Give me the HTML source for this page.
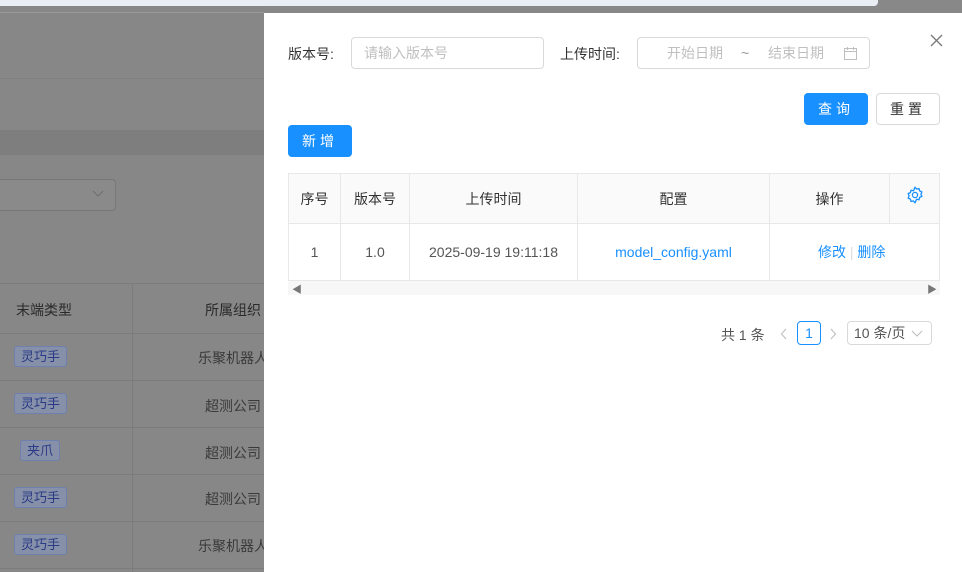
<!DOCTYPE html>
<html><head><meta charset="utf-8"><style>
*{box-sizing:border-box;margin:0;padding:0}
body{width:962px;height:572px;overflow:hidden;position:relative;font-family:"Liberation Sans","Noto Sans CJK SC",sans-serif;font-size:14px;color:#333;background:#888}
.bg{position:absolute;left:0;top:0;width:264px;height:572px;background:#878787}
.abs{position:absolute}
.tag{position:absolute;border:1px solid #6f7fae;border-radius:3px;background:#8690a8;color:#2b3a86;font-size:13px;height:21px;line-height:19px;padding:0 6px}
.hl{position:absolute;left:0;width:264px;height:1px;background:#7c7c7c}
.inp{position:absolute;border:1px solid #d9d9d9;border-radius:4px;height:32px;color:#bfbfbf;font-size:14px;line-height:30px}
.btn{position:absolute;border-radius:4px;height:32px;line-height:32px;text-align:center;font-size:14px;letter-spacing:4px}
table{border-collapse:collapse;position:absolute;left:24px;top:160px;width:652px}
td,th{border:1px solid #e8e8e8;text-align:center;font-weight:normal;font-size:14px}
th{background:#fafafa;height:50px;color:#333}
td{height:57px;color:#555}
a{color:#1890ff;text-decoration:none}
.org{position:absolute;color:#3a3a3a}
</style></head><body>
<div class="bg"></div>
<div class="abs" style="left:0;top:0;width:878px;height:6px;background:#e9edf4;border-radius:0 0 4px 0"></div>
<div class="abs" style="left:0;top:12px;width:264px;height:1px;background:#9a9a9a"></div>
<div class="hl" style="top:78px;background:#808080"></div>
<div class="abs" style="left:0;top:130px;width:264px;height:25px;background:#7e7e7e"></div>
<div class="abs" style="left:-5px;top:179px;width:121px;height:32px;border:1px solid #777;border-radius:4px;background:#8a8a8a"></div>
<svg class="abs" style="left:92px;top:190px" width="12" height="8"><path d="M1 1l5 5 5-5" fill="none" stroke="#6e6e6e" stroke-width="1"/></svg>
<div class="hl" style="top:283px"></div>
<div class="abs" style="left:132px;top:283px;width:1px;height:289px;background:#7c7c7c"></div>
<div class="abs" style="left:16px;top:300px;color:#2a2a2a">末端类型</div>
<div class="org" style="top:300px;left:205px;color:#2a2a2a">所属组织</div>
<div class="hl" style="top:333px"></div>
<div class="hl" style="top:380px"></div>
<div class="hl" style="top:427px"></div>
<div class="hl" style="top:474px"></div>
<div class="hl" style="top:521px"></div>
<div class="hl" style="top:568px"></div>
<div class="tag" style="left:14px;top:346px">灵巧手</div><div class="org" style="left:198px;top:348px">乐聚机器人</div>
<div class="tag" style="left:14px;top:393px">灵巧手</div><div class="org" style="left:205px;top:396px">超测公司</div>
<div class="tag" style="left:20px;top:440px">夹爪</div><div class="org" style="left:205px;top:443px">超测公司</div>
<div class="tag" style="left:14px;top:487px">灵巧手</div><div class="org" style="left:205px;top:489px">超测公司</div>
<div class="tag" style="left:14px;top:534px">灵巧手</div><div class="org" style="left:198px;top:536px">乐聚机器人</div>
<div class="abs" style="left:264px;top:13px;width:698px;height:559px;background:#fff">
 <div class="abs" style="left:24px;top:31px;color:#333">版本号:</div>
 <div class="inp" style="left:87px;top:24px;width:193px;padding-left:12px">请输入版本号</div>
 <div class="abs" style="left:296px;top:31px;color:#333">上传时间:</div>
 <div class="inp" style="left:373px;top:24px;width:233px"><span class="abs" style="left:29px">开始日期</span><span class="abs" style="left:103px;color:#999">~</span><span class="abs" style="left:130px">结束日期</span>
 <svg class="abs" style="left:206px;top:9px" width="13" height="13"><rect x="0.5" y="1.5" width="12" height="11" fill="none" stroke="#bfbfbf"/><path d="M0.5 4.5h12M3.5 0v3M9.5 0v3" stroke="#bfbfbf"/></svg></div>
 <svg class="abs" style="left:666px;top:21px" width="13" height="13"><path d="M1 1l11 11M12 1L1 12" stroke="#777" stroke-width="1.3"/></svg>
 <div class="btn" style="left:540px;top:80px;width:64px;background:#1890ff;color:#fff">查询</div>
 <div class="btn" style="left:612px;top:80px;width:64px;border:1px solid #d9d9d9;color:#333;line-height:30px">重置</div>
 <div class="btn" style="left:24px;top:112px;width:64px;background:#1890ff;color:#fff">新增</div>
 <table>
 <tr><th style="width:52px">序号</th><th style="width:69px">版本号</th><th style="width:168px">上传时间</th><th style="width:192px">配置</th><th style="width:120px">操作</th><th style="vertical-align:top;padding-top:12px"><svg width="18" height="18" viewBox="0 0 18 18"><path d="M9 1.2l1.6 1.9 2.4-.6.6 2.4 2.3 1-1 2.3 1 2.2-2.3 1-.6 2.4-2.4-.6L9 16.8l-1.6-1.9-2.4.6-.6-2.4-2.3-1 1-2.2-1-2.3 2.3-1 .6-2.4 2.4.6z" fill="none" stroke="#1890ff" stroke-width="1.3" stroke-linejoin="round"/><circle cx="9" cy="9" r="2.6" fill="none" stroke="#1890ff" stroke-width="1.3"/></svg></th></tr>
 <tr><td>1</td><td>1.0</td><td>2025-09-19 19:11:18</td><td><a>model_config.yaml</a></td><td colspan="2" style="text-align:left;padding-left:48px"><a>修改</a> <span style="color:#ddd">|</span> <a>删除</a></td></tr>
 </table>
 <div class="abs" style="left:24px;top:268px;width:652px;height:14px;background:#f7f7f7"></div>
 <div class="abs" style="left:28px;top:268px;font-size:10px;color:#777">◀</div>
 <div class="abs" style="left:663px;top:268px;font-size:10px;color:#777">▶</div>
 <div class="abs" style="left:457px;top:312px;color:#555">共 1 条</div>
 <svg class="abs" style="left:516px;top:315px" width="8" height="12"><path d="M6 1L1.5 6 6 11" fill="none" stroke="#bbb"/></svg>
 <div class="abs" style="left:533px;top:308px;width:24px;height:24px;border:1px solid #1890ff;border-radius:4px;color:#1890ff;text-align:center;line-height:22px">1</div>
 <svg class="abs" style="left:565px;top:315px" width="8" height="12"><path d="M2 1l4.5 5L2 11" fill="none" stroke="#bbb"/></svg>
 <div class="abs" style="left:583px;top:308px;width:85px;height:24px;border:1px solid #d9d9d9;border-radius:4px;color:#555;padding-left:6px;line-height:22px">10 条/页</div>
 <svg class="abs" style="left:647px;top:317px" width="12" height="8"><path d="M1 1l5 5 5-5" fill="none" stroke="#bbb"/></svg>
</div>
</body></html>
